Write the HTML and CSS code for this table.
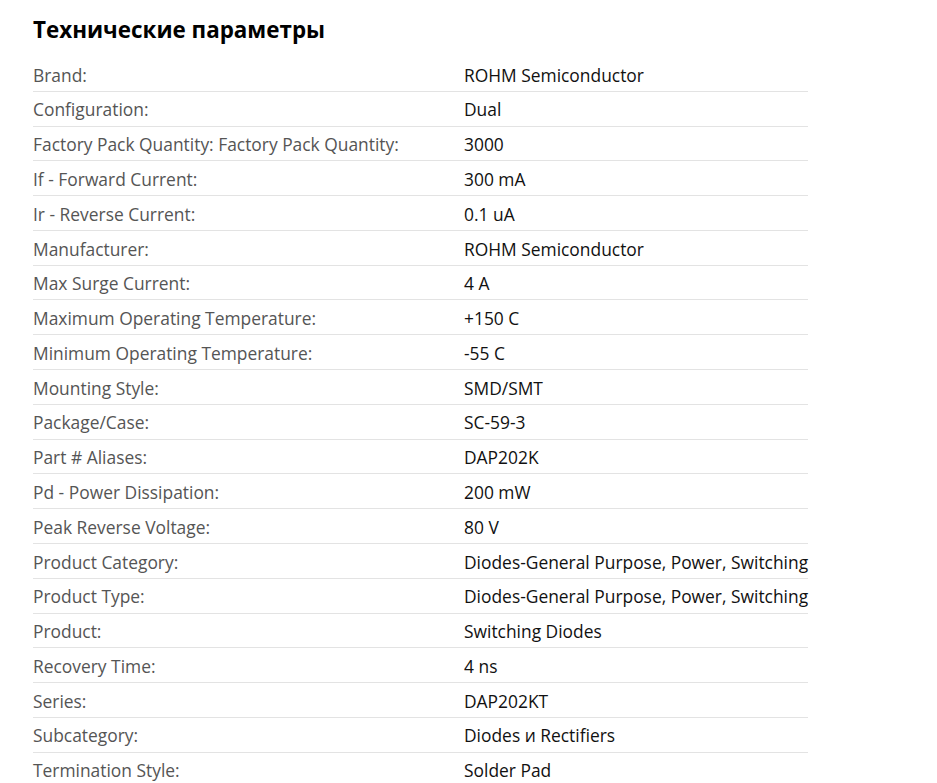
FILE: index.html
```html
<!DOCTYPE html>
<html lang="ru">
<head>
<meta charset="utf-8">
<link rel="stylesheet" href="styles.css">
</head>
<body>
<div class="page">
  <h2 class="title">Технические параметры</h2>
  <div class="specs">
    <div class="row"><div class="k">Brand:</div><div class="v">ROHM Semiconductor</div></div>
    <div class="row"><div class="k">Configuration:</div><div class="v">Dual</div></div>
    <div class="row"><div class="k">Factory Pack Quantity: Factory Pack Quantity:</div><div class="v">3000</div></div>
    <div class="row"><div class="k">If - Forward Current:</div><div class="v">300 mA</div></div>
    <div class="row"><div class="k">Ir - Reverse Current:</div><div class="v">0.1 uA</div></div>
    <div class="row"><div class="k">Manufacturer:</div><div class="v">ROHM Semiconductor</div></div>
    <div class="row"><div class="k">Max Surge Current:</div><div class="v">4 A</div></div>
    <div class="row"><div class="k">Maximum Operating Temperature:</div><div class="v">+150 C</div></div>
    <div class="row"><div class="k">Minimum Operating Temperature:</div><div class="v">-55 C</div></div>
    <div class="row"><div class="k">Mounting Style:</div><div class="v">SMD/SMT</div></div>
    <div class="row"><div class="k">Package/Case:</div><div class="v">SC-59-3</div></div>
    <div class="row"><div class="k">Part # Aliases:</div><div class="v">DAP202K</div></div>
    <div class="row"><div class="k">Pd - Power Dissipation:</div><div class="v">200 mW</div></div>
    <div class="row"><div class="k">Peak Reverse Voltage:</div><div class="v">80 V</div></div>
    <div class="row"><div class="k">Product Category:</div><div class="v">Diodes-General Purpose, Power, Switching</div></div>
    <div class="row"><div class="k">Product Type:</div><div class="v">Diodes-General Purpose, Power, Switching</div></div>
    <div class="row"><div class="k">Product:</div><div class="v">Switching Diodes</div></div>
    <div class="row"><div class="k">Recovery Time:</div><div class="v">4 ns</div></div>
    <div class="row"><div class="k">Series:</div><div class="v">DAP202KT</div></div>
    <div class="row"><div class="k">Subcategory:</div><div class="v">Diodes и Rectifiers</div></div>
    <div class="row"><div class="k">Termination Style:</div><div class="v">Solder Pad</div></div>
  </div>
</div>
</body>
</html>
```
FILE: styles.css
```css
html, body {
  margin: 0;
  padding: 0;
  background: #fff;
}
.page {
  padding: 14px 0 0 33px;
  font-family: "Open Sans", sans-serif;
}
.title {
  margin: 0 0 11px 0;
  font-size: 22.4px;
  font-weight: 700;
  line-height: 32px;
  color: #000;
}
.specs {
  width: 775px;
}
.row {
  display: grid;
  grid-template-columns: 431px 1fr;
  border-bottom: 1px solid #e3e3e3;
  padding: 5.6px 0 4.2px 0;
  font-size: 17.4px;
  line-height: 24px;
}
.k {
  color: #555;
}
.v {
  color: #111;
  white-space: nowrap;
}
```
